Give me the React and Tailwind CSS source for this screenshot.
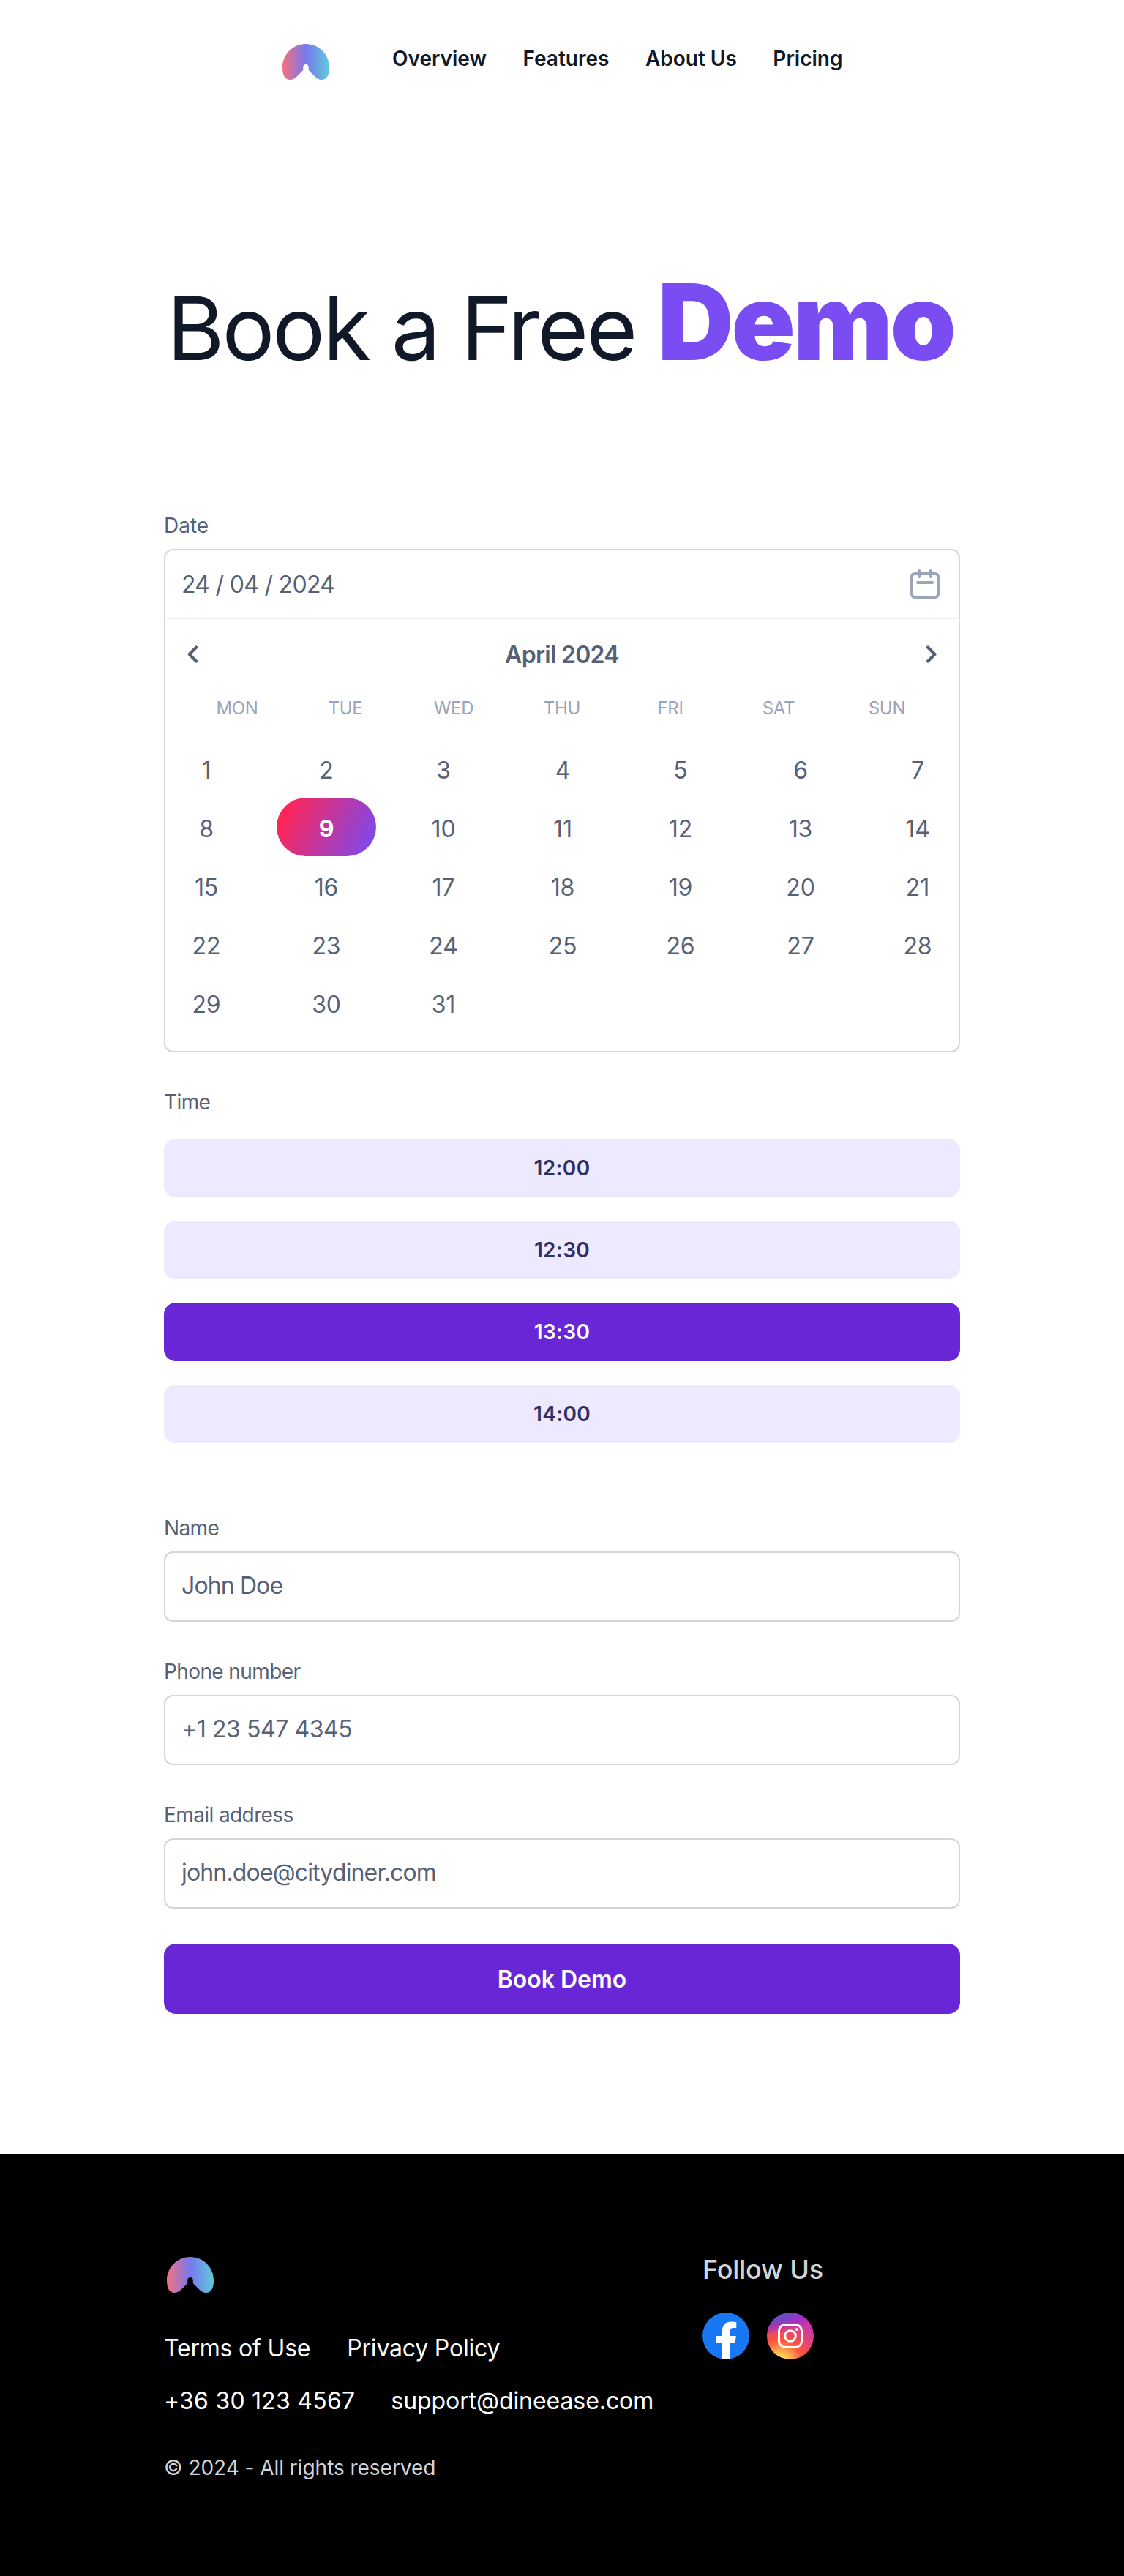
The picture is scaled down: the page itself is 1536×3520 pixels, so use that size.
const sans = "font-['Inter',sans-serif]";

function Logo({ id }) {
  return (
    <svg width="64" height="49" viewBox="0 0 64 49" className="block">
      <defs>
        <linearGradient id={id} x1="0" x2="64" y1="0" y2="0" gradientUnits="userSpaceOnUse">
          <stop offset="0.05" stopColor="#e9718b" />
          <stop offset="0.5" stopColor="#7679ee" />
          <stop offset="0.97" stopColor="#62c5da" />
        </linearGradient>
      </defs>
      <path
        fill={`url(#${id})`}
        d="M32 0C14.300 0 0 14.300 0 32C0 42.500 3.200 49 10.500 49C14.200 49 17 47.200 19.500 44.700L27.300 36.900C28.600 35.600 28.200 34.500 28.200 31.800C28.200 29.600 29.900 28 32 28C34.100 28 35.800 29.600 35.800 31.800C35.800 34.500 35.400 35.600 36.700 36.900L44.500 44.700C47 47.200 49.800 49 53.500 49C60.800 49 64 42.500 64 32C64 14.300 49.700 0 32 0Z"
      />
    </svg>
  );
}

function CalendarIcon() {
  return (
    <svg width="48" height="48" viewBox="0 0 24 24" fill="none" stroke="#9ba5b9" strokeWidth="2" strokeLinecap="round" strokeLinejoin="round">
      <rect x="3" y="5" width="18" height="16" rx="2" />
      <path d="M8 3v4M16 3v4M7 11h10" />
    </svg>
  );
}

function Chevron({ d }) {
  return (
    <svg width="40" height="48" viewBox="0 0 40 48" fill="none" stroke="#566175" strokeWidth="4.200" strokeLinecap="round" strokeLinejoin="round">
      <path d={d} />
    </svg>
  );
}

function Field({ label, value, tracking }) {
  return (
    <label className="block">
      <span className="block text-[28px] leading-10 tracking-[-0.6px] text-[#566175]">{label}</span>
      <span className={`mt-3 flex h-24 items-center rounded-xl border-2 border-[#d4d5d7] bg-white px-[22px] pb-0.5 text-[32px] text-[#566175] ${tracking}`}>
        {value}
      </span>
    </label>
  );
}

const weekdays = ["MON", "TUE", "WED", "THU", "FRI", "SAT", "SUN"];
const days = Array.from({ length: 31 }, (_, i) => i + 1);
const slots = ["12:00", "12:30", "13:30", "14:00"];

function Calendar() {
  return (
    <div className="mt-3 h-[688px] rounded-xl border-2 border-[#d4d5d7]">
      <div className="-mx-0.5 flex h-[94px] items-center justify-between border-b-2 border-[#edf0f3] px-6 text-[32px] tracking-[-0.7px]">
        <span className="pt-px">24 / 04 / 2024</span>
        <CalendarIcon />
      </div>
      <div className="flex h-24 items-center justify-between px-4">
        <Chevron d="M26.200 14.500L16.700 24l9.500 9.500" />
        <span className="pt-px text-[32px] font-semibold tracking-[-0.7px]">April 2024</span>
        <Chevron d="M14 14.500L23.500 24l-9.500 9.500" />
      </div>
      <div className="grid h-[50px] grid-cols-7 items-center px-6 pt-px text-center text-2xl tracking-[-0.3px] text-[#9ba5b9]">
        {weekdays.map((d) => (
          <span key={d}>{d}</span>
        ))}
      </div>
      <div className="mt-[18px] grid auto-rows-[80px] grid-cols-[64px_264px_56px_270px_52px_276px_44px] pl-6 text-center text-[32px] leading-[86px] tracking-[-0.12px]">
        {days.map((d) =>
          d === 9 ? (
            <span key={d} className="mx-auto h-20 w-[136px] rounded-full bg-linear-[115deg,#ff2556_10%,#7b4aee_95%] font-bold text-white">
              {d}
            </span>
          ) : (
            <span key={d}>{d}</span>
          )
        )}
      </div>
    </div>
  );
}

export default function App() {
  return (
    <div className={`${sans} w-[1536px] bg-white text-[#566175]`}>
      <header className="flex h-40 items-start pt-[60px] pl-[386px]">
        <Logo id="logoTop" />
        <nav className="ml-[86px] flex gap-[49.5px] text-[28px] leading-10 font-semibold text-[#111827]">
          <a>Overview</a>
          <a>Features</a>
          <a>About Us</a>
          <a>Pricing</a>
        </nav>
      </header>

      <main className="h-[2784px] px-56">
        <h1 className="flex h-[538px] items-baseline gap-[30.5px] pt-[190px] pl-1 whitespace-nowrap text-[#111827]">
          <span className="text-[120px] leading-[180px] tracking-[-3.05px]">Book a Free</span>
          <span className="text-[144px] leading-[180px] font-black tracking-[-3px] text-[#7a4df3]">Demo</span>
        </h1>

        <section>
          <p className="text-[28px] leading-10">Date</p>
          <Calendar />
        </section>

        <section className="mt-12">
          <p className="text-[28px] leading-10 tracking-[-0.6px]">Time</p>
          <div className="mt-[30px] flex flex-col gap-8">
            {slots.map((t) => (
              <button
                key={t}
                className={`h-20 rounded-2xl text-[28px] font-semibold tracking-[0.35px] ${
                  t === "13:30" ? "bg-[#6926d7] text-white" : "bg-[#ede9fe] text-[#2f2e66]"
                }`}
              >
                {t}
              </button>
            ))}
          </div>
        </section>

        <form className="mt-24 flex flex-col gap-12">
          <Field label="Name" value="John Doe" tracking="tracking-[-0.88px]" />
          <Field label="Phone number" value="+1 23 547 4345" tracking="tracking-[-0.42px]" />
          <Field label="Email address" value="john.doe@citydiner.com" tracking="tracking-[-0.84px]" />
          <button type="button" className="h-24 rounded-2xl bg-[#6926d7] pt-px text-[32px] font-semibold text-white">
            Book Demo
          </button>
        </form>
      </main>

      <footer className="flex h-[576px] bg-black px-56 text-[32px] text-white">
        <div className="w-[736px] pt-[140px]">
          <div className="pl-1">
            <Logo id="logoBottom" />
          </div>
          <div className="mt-[52px] flex gap-[50px] leading-[48px] tracking-[-0.2px]">
            <a>Terms of Use</a>
            <a>Privacy Policy</a>
          </div>
          <div className="mt-6 flex gap-[49px] leading-[48px]">
            <a className="tracking-[0.24px]">+36 30 123 4567</a>
            <a className="tracking-[-0.07px]">support@dineease.com</a>
          </div>
          <p className="mt-[47px] text-[28px] leading-10 tracking-[-0.04px] text-[#d1d5db]">© 2024 - All rights reserved</p>
        </div>
        <div className="pt-[129px]">
          <h2 className="text-4xl leading-[56px] font-medium tracking-[-0.17px] text-[#d1d5db]">Follow Us</h2>
          <div className="mt-[31px] flex gap-6">
            <svg width="64" height="64" viewBox="0 0 64 64">
              <circle cx="32" cy="32" r="32" fill="#1877f2" />
              <path
                fill="#fff"
                d="M44.500 41.250L45.900 32H37v-6c0-2.530 1.240-5 5.210-5h4.040v-7.870s-3.660-.630-7.160-.630C31.780 12.500 27 16.930 27 24.950V32h-8.130v9.250H27v22.360a32.300 32.300 0 0 0 10 0V41.250z"
              />
            </svg>
            <svg width="64" height="64" viewBox="0 0 64 64">
              <defs>
                <radialGradient id="igWarm" cx="18" cy="68" r="62" gradientUnits="userSpaceOnUse">
                  <stop offset="0" stopColor="#ffdd55" />
                  <stop offset="0.120" stopColor="#ffdd55" />
                  <stop offset="0.500" stopColor="#ff543e" />
                  <stop offset="1" stopColor="#c837ab" />
                </radialGradient>
                <radialGradient id="igCool" cx="0" cy="0" r="1" gradientUnits="userSpaceOnUse" gradientTransform="matrix(5.600 27.900 -115 23 -10.700 4.600)">
                  <stop offset="0" stopColor="#3771c8" />
                  <stop offset="0.128" stopColor="#3771c8" />
                  <stop offset="1" stopColor="#6600ff" stopOpacity="0" />
                </radialGradient>
              </defs>
              <circle cx="32" cy="32" r="32" fill="url(#igWarm)" />
              <circle cx="32" cy="32" r="32" fill="url(#igCool)" />
              <g fill="none" stroke="#fff" strokeWidth="3">
                <rect x="16.500" y="16.500" width="31" height="31" rx="8.500" />
                <circle cx="32" cy="32" r="7.300" />
              </g>
              <circle cx="41" cy="23" r="2.100" fill="#fff" />
            </svg>
          </div>
        </div>
      </footer>
    </div>
  );
}
